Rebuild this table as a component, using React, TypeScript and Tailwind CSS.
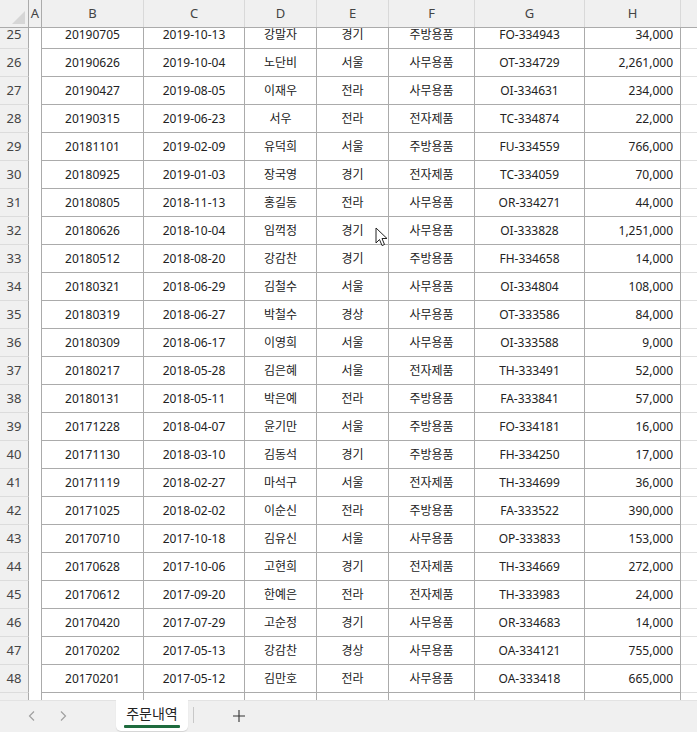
import React from "react";

const cols = [
  { key: "A", w: "w-[13px]" },
  { key: "B", w: "w-[102px]" },
  { key: "C", w: "w-[101px]" },
  { key: "D", w: "w-[72px]" },
  { key: "E", w: "w-[72px]" },
  { key: "F", w: "w-[86px]" },
  { key: "G", w: "w-[110px]" },
  { key: "H", w: "w-[96px]" },
];

const rows: string[][] = [
  ["20190705", "2019-10-13", "강말자", "경기", "주방용품", "FO-334943", "34,000"],
  ["20190626", "2019-10-04", "노단비", "서울", "사무용품", "OT-334729", "2,261,000"],
  ["20190427", "2019-08-05", "이재우", "전라", "사무용품", "OI-334631", "234,000"],
  ["20190315", "2019-06-23", "서우", "전라", "전자제품", "TC-334874", "22,000"],
  ["20181101", "2019-02-09", "유덕희", "서울", "주방용품", "FU-334559", "766,000"],
  ["20180925", "2019-01-03", "장국영", "경기", "전자제품", "TC-334059", "70,000"],
  ["20180805", "2018-11-13", "홍길동", "전라", "사무용품", "OR-334271", "44,000"],
  ["20180626", "2018-10-04", "임꺽정", "경기", "사무용품", "OI-333828", "1,251,000"],
  ["20180512", "2018-08-20", "강감찬", "경기", "주방용품", "FH-334658", "14,000"],
  ["20180321", "2018-06-29", "김철수", "서울", "사무용품", "OI-334804", "108,000"],
  ["20180319", "2018-06-27", "박철수", "경상", "사무용품", "OT-333586", "84,000"],
  ["20180309", "2018-06-17", "이영희", "서울", "사무용품", "OI-333588", "9,000"],
  ["20180217", "2018-05-28", "김은혜", "서울", "전자제품", "TH-333491", "52,000"],
  ["20180131", "2018-05-11", "박은예", "전라", "주방용품", "FA-333841", "57,000"],
  ["20171228", "2018-04-07", "윤기만", "서울", "주방용품", "FO-334181", "16,000"],
  ["20171130", "2018-03-10", "김동석", "경기", "주방용품", "FH-334250", "17,000"],
  ["20171119", "2018-02-27", "마석구", "서울", "전자제품", "TH-334699", "36,000"],
  ["20171025", "2018-02-02", "이순신", "전라", "주방용품", "FA-333522", "390,000"],
  ["20170710", "2017-10-18", "김유신", "서울", "사무용품", "OP-333833", "153,000"],
  ["20170628", "2017-10-06", "고현희", "경기", "전자제품", "TH-334669", "272,000"],
  ["20170612", "2017-09-20", "한예은", "전라", "전자제품", "TH-333983", "24,000"],
  ["20170420", "2017-07-29", "고순정", "경기", "사무용품", "OR-334683", "14,000"],
  ["20170202", "2017-05-13", "강감찬", "경상", "사무용품", "OA-334121", "755,000"],
  ["20170201", "2017-05-12", "김만호", "전라", "사무용품", "OA-333418", "665,000"],
  ["", "", "", "", "", "", ""],
];

function Cursor() {
  return (
    <svg className="absolute left-[375px] top-[227px]" width="13" height="20" viewBox="0 0 13 20">
      <path d="M1 1 L1 16 L4.5 12.5 L7 18.5 L9.5 17.5 L7 11.5 L12 11.5 Z" fill="#fff" stroke="#222" strokeWidth="1" strokeLinejoin="round" />
    </svg>
  );
}

export default function App() {
  return (
    <div
      className="relative w-[697px] h-[732px] overflow-hidden bg-white text-[#222]"
      style={{ fontFamily: '"Noto Sans", "Noto Sans CJK KR", sans-serif' }}
    >
      {/* column headers */}
      <div className="flex h-[28px] bg-[#f0f0f0] border-b border-[#ababab]">
        <div className="w-[29px] border-r border-[#ababab] flex items-end justify-end pr-[3px] pb-[3px]">
          <div className="w-0 h-0 border-l-[13px] border-l-transparent border-b-[13px] border-b-[#d6d6d6]" />
        </div>
        {cols.map((c, i) => (
          <div
            key={c.key}
            className={`${c.w} shrink-0 flex items-center justify-center text-[13px] text-[#444] border-r ${i === 0 ? "border-[#ababab]" : "border-[#d9d9d9]"}`}
          >
            {c.key}
          </div>
        ))}
        <div className="flex-1" />
      </div>

      {/* body */}
      <div className="h-[672px] overflow-hidden">
        <div className="-mt-[7px]">
          {rows.map((r, ri) => (
            <div key={ri} className="flex h-[28px]">
              <div className="w-[29px] shrink-0 bg-[#f0f0f0] border-r border-b border-r-[#ababab] border-b-[#dcdcdc] flex items-center justify-center text-[13px] text-[#444]">
                {25 + ri}
              </div>
              <div className="w-[13px] shrink-0 border-r border-[#ababab]" />
              {r.map((v, ci) => (
                <div
                  key={ci}
                  className={`${cols[ci + 1].w} shrink-0 border-r border-b border-[#ababab] flex items-center text-[12px] ${ci === 6 ? "justify-end pr-[7px]" : "justify-center"}`}
                >
                  {v}
                </div>
              ))}
              <div className="flex-1 border-b border-[#e1e1e1]" />
            </div>
          ))}
        </div>
      </div>

      {/* sheet tabs */}
      <div className="flex h-[32px] bg-[#f0f0f0] border-t border-[#e3e3e3] items-start text-[#999]">
        <div className="w-[116px] flex items-center h-[30px] pl-[26px] gap-[19px]">
          <svg width="12" height="12" viewBox="0 0 12 12"><path d="M8 1.5 L3.5 6 L8 10.5" fill="none" stroke="#a0a0a0" strokeWidth="1.2" /></svg>
          <svg width="12" height="12" viewBox="0 0 12 12"><path d="M4 1.5 L8.5 6 L4 10.5" fill="none" stroke="#a0a0a0" strokeWidth="1.2" /></svg>
        </div>
        <div className="w-[72px] h-[31px] -mt-px bg-white rounded-b-[5px] shadow-[0_1px_1px_rgba(0,0,0,0.12)] flex flex-col items-center justify-center">
          <span className="text-[14px] text-[#222] leading-[18px] mt-[1px]">주문내역</span>
          <div className="w-[56px] h-[3px] bg-[#1e6b3e] mt-[2px] rounded-[1px]" />
        </div>
        <div className="w-px h-[16px] bg-[#c8c8c8] ml-[5px] mt-[6px]" />
        <div className="ml-[38px] h-[30px] flex items-center">
          <svg width="14" height="14" viewBox="0 0 14 14"><path d="M7 1 V13 M1 7 H13" stroke="#333" strokeWidth="1.1" /></svg>
        </div>
      </div>

      <Cursor />
    </div>
  );
}
